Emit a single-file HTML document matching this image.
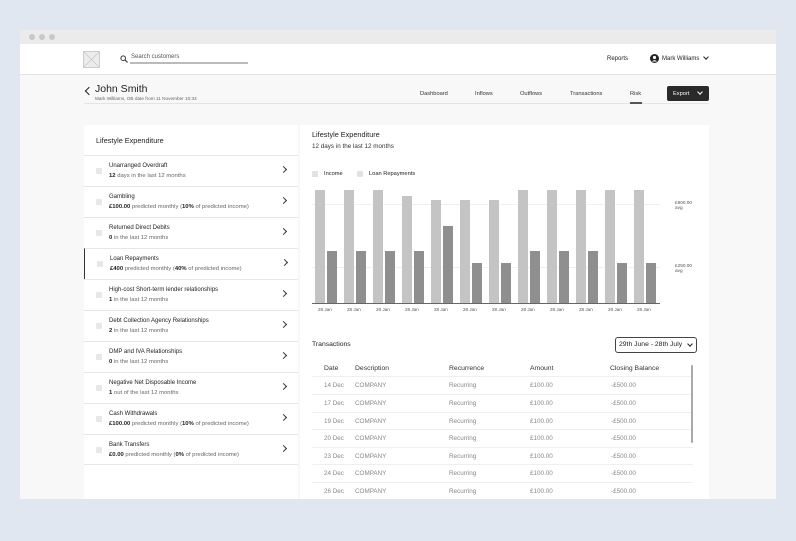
<!DOCTYPE html>
<html><head><meta charset="utf-8"><style>
*{margin:0;padding:0;box-sizing:border-box}
body{width:796px;height:541px;background:#e1e7f0;font-family:"Liberation Sans",sans-serif;position:relative;overflow:hidden;color:#222}
.a{position:absolute}
.win{left:20px;top:30px;width:756px;height:469px;background:#f8f8f8;overflow:hidden}
.t{position:absolute;white-space:nowrap}
.item{position:absolute;left:84px;width:214px;height:31px;border-top:1px solid #e6e6e6}
.item .cb{position:absolute;left:12px;top:12px;width:6px;height:6px;background:#e8e8e8}
.item .h{position:absolute;left:25px;top:7px;font-size:6px;color:#222}
.item .s{position:absolute;left:25px;top:17px;font-size:5.9px;color:#666}
.item .s b{color:#222}
.item .chev{position:absolute;left:197px;top:11px;width:5px;height:5px;border-right:1.2px solid #333;border-top:1.2px solid #333;transform:rotate(45deg)}
.bar{position:absolute;width:10px}
.lb{background:#c4c4c4}
.db{background:#8f8f8f}
.row{position:absolute;left:312px;width:381px;height:17.5px;border-top:1.5px solid #efefef;font-size:6.3px;color:#888}
.row span{position:absolute;top:5px}
.xl{position:absolute;top:307px;font-size:4.6px;color:#555}
</style></head><body>
<div class="a win"></div>
<div class="a" style="left:20px;top:30px;width:756px;height:14px;background:#ebebeb"></div>
<div class="a" style="left:29px;top:34px;width:6px;height:6px;border-radius:50%;background:#c8c8c8"></div>
<div class="a" style="left:39px;top:34px;width:6px;height:6px;border-radius:50%;background:#c8c8c8"></div>
<div class="a" style="left:49px;top:34px;width:6px;height:6px;border-radius:50%;background:#c8c8c8"></div>
<div class="a" style="left:20px;top:44px;width:756px;height:31px;background:#fff;border-bottom:1px solid #e2e2e2"></div>
<svg class="a" style="left:83px;top:51px" width="17" height="17"><rect x="0.5" y="0.5" width="16" height="16" fill="#ececec" stroke="#ccc"/><path d="M0 0L17 17M17 0L0 17" stroke="#ccc" stroke-width="0.8"/></svg>
<svg class="a" style="left:120px;top:55px" width="8" height="8"><circle cx="3.2" cy="3.2" r="2.3" fill="none" stroke="#333" stroke-width="1"/><path d="M5 5L7.5 7.5" stroke="#333" stroke-width="1.1"/></svg>
<div class="t" style="left:131px;top:54px;font-size:6px;color:#555">Search customers</div>
<div class="a" style="left:130px;top:62px;width:118px;height:1.5px;background:#bbb"></div>
<div class="t" style="left:607px;top:56px;font-size:6px;color:#222">Reports</div>
<svg class="a" style="left:650px;top:54px" width="9" height="9"><circle cx="4.5" cy="4.5" r="4.5" fill="#222"/><circle cx="4.5" cy="3.5" r="1.6" fill="#fff"/><path d="M1.8 7.5Q4.5 4.8 7.2 7.5" fill="#fff"/></svg>
<div class="t" style="left:662px;top:56px;font-size:6px;color:#222">Mark Williams</div>
<div class="a" style="left:704px;top:55px;width:4px;height:4px;border-right:1px solid #222;border-bottom:1px solid #222;transform:rotate(45deg)"></div>

<div class="a" style="left:86px;top:88px;width:6px;height:6px;border-left:1.6px solid #222;border-bottom:1.6px solid #222;transform:rotate(45deg)"></div>
<div class="t" style="left:95px;top:83px;font-size:10.5px;color:#222">John Smith</div>
<div class="t" style="left:95px;top:96px;font-size:4.7px;color:#666">Mark Williams, OB date from 11 November 10:34</div>
<div class="a" style="left:84px;top:103px;width:625px;height:1px;background:#e4e4e4"></div>
<div class="t" style="left:420px;top:91px;font-size:5.7px;color:#333">Dashboard</div>
<div class="t" style="left:475px;top:91px;font-size:5.7px;color:#333">Inflows</div>
<div class="t" style="left:520px;top:91px;font-size:5.7px;color:#333">Outflows</div>
<div class="t" style="left:570px;top:91px;font-size:5.7px;color:#333">Transactions</div>
<div class="t" style="left:630px;top:91px;font-size:5.7px;color:#333">Risk</div>
<div class="a" style="left:630px;top:102px;width:12px;height:1.5px;background:#555"></div>
<div class="a" style="left:667px;top:86px;width:42px;height:15px;background:#2a2a2a;border-radius:2px"></div>
<div class="t" style="left:673px;top:90.5px;font-size:5.7px;color:#fff">Export</div>
<div class="a" style="left:698px;top:90px;width:4px;height:4px;border-right:1px solid #fff;border-bottom:1px solid #fff;transform:rotate(45deg)"></div>

<div class="a" style="left:84px;top:125px;width:214px;height:374px;background:#fff"></div>
<div class="t" style="left:96px;top:136px;font-size:7.3px;color:#222">Lifestyle Expenditure</div>
<div class="item" style="top:155px"><div class="cb"></div><div class="h">Unarranged Overdraft</div><div class="s"><b>12</b> days in the last 12 months</div><div class="chev"></div></div>
<div class="item" style="top:186px"><div class="cb"></div><div class="h">Gambling</div><div class="s"><b>£100.00</b> predicted monthly (<b>10%</b> of predicted income)</div><div class="chev"></div></div>
<div class="item" style="top:217px"><div class="cb"></div><div class="h">Returned Direct Debits</div><div class="s"><b>0</b> in the last 12 months</div><div class="chev"></div></div>
<div class="item" style="top:248px;border-left:1.5px solid #333"><div class="cb"></div><div class="h">Loan Repayments</div><div class="s"><b>£400</b> predicted monthly (<b>40%</b> of predicted income)</div><div class="chev"></div></div>
<div class="item" style="top:279px"><div class="cb"></div><div class="h">High-cost Short-term lender relationships</div><div class="s"><b>1</b> in the last 12 months</div><div class="chev"></div></div>
<div class="item" style="top:310px"><div class="cb"></div><div class="h">Debt Collection Agency Relationships</div><div class="s"><b>2</b> in the last 12 months</div><div class="chev"></div></div>
<div class="item" style="top:341px"><div class="cb"></div><div class="h">DMP and IVA Relationships</div><div class="s"><b>0</b> in the last 12 months</div><div class="chev"></div></div>
<div class="item" style="top:372px"><div class="cb"></div><div class="h">Negative Net Disposable Income</div><div class="s"><b>1</b> out of the last 12 months</div><div class="chev"></div></div>
<div class="item" style="top:403px"><div class="cb"></div><div class="h">Cash Withdrawals</div><div class="s"><b>£100.00</b> predicted monthly (<b>10%</b> of predicted income)</div><div class="chev"></div></div>
<div class="item" style="top:434px;border-bottom:1px solid #e6e6e6"><div class="cb"></div><div class="h">Bank Transfers</div><div class="s"><b>£0.00</b> predicted monthly (<b>0%</b> of predicted income)</div><div class="chev"></div></div>

<div class="a" style="left:300px;top:125px;width:409px;height:374px;background:#fff"></div>
<div class="t" style="left:312px;top:130px;font-size:7.3px;color:#222">Lifestyle Expenditure</div>
<div class="t" style="left:312px;top:143px;font-size:6.3px;color:#333">12 days in the last 12 months</div>
<div class="a" style="left:312px;top:171px;width:6px;height:6px;background:#e2e2e2"></div>
<div class="t" style="left:324px;top:171px;font-size:5.7px;color:#222">Income</div>
<div class="a" style="left:357px;top:171px;width:6px;height:6px;background:#e2e2e2"></div>
<div class="t" style="left:369px;top:171px;font-size:5.7px;color:#222">Loan Repayments</div>
<div class="a" style="left:312px;top:204px;width:348px;height:1px;background:#f0f0f0"></div>
<div class="a" style="left:312px;top:267px;width:348px;height:1px;background:#f0f0f0"></div>
<div class="t" style="left:675px;top:200px;font-size:4.7px;color:#555;line-height:5px">£900.00<br>avg</div>
<div class="t" style="left:675px;top:263px;font-size:4.7px;color:#555;line-height:5px">£250.00<br>avg</div>
<div class="a" style="left:312px;top:303px;width:348px;height:1px;background:#666"></div>
<div class="bar lb" style="left:315px;top:190px;height:113px"></div><div class="bar db" style="left:327px;top:251px;height:52px"></div>
<div class="bar lb" style="left:344px;top:190px;height:113px"></div><div class="bar db" style="left:356px;top:251px;height:52px"></div>
<div class="bar lb" style="left:373px;top:190px;height:113px"></div><div class="bar db" style="left:385px;top:251px;height:52px"></div>
<div class="bar lb" style="left:402px;top:196px;height:107px"></div><div class="bar db" style="left:414px;top:251px;height:52px"></div>
<div class="bar lb" style="left:431px;top:200px;height:103px"></div><div class="bar db" style="left:443px;top:226px;height:77px"></div>
<div class="bar lb" style="left:460px;top:200px;height:103px"></div><div class="bar db" style="left:472px;top:263px;height:40px"></div>
<div class="bar lb" style="left:489px;top:200px;height:103px"></div><div class="bar db" style="left:501px;top:263px;height:40px"></div>
<div class="bar lb" style="left:518px;top:190px;height:113px"></div><div class="bar db" style="left:530px;top:251px;height:52px"></div>
<div class="bar lb" style="left:547px;top:190px;height:113px"></div><div class="bar db" style="left:559px;top:251px;height:52px"></div>
<div class="bar lb" style="left:576px;top:190px;height:113px"></div><div class="bar db" style="left:588px;top:251px;height:52px"></div>
<div class="bar lb" style="left:605px;top:190px;height:113px"></div><div class="bar db" style="left:617px;top:263px;height:40px"></div>
<div class="bar lb" style="left:634px;top:190px;height:113px"></div><div class="bar db" style="left:646px;top:263px;height:40px"></div>
<div class="xl" style="left:318px">28 Jan</div>
<div class="xl" style="left:347px">28 Jan</div>
<div class="xl" style="left:376px">28 Jan</div>
<div class="xl" style="left:405px">28 Jan</div>
<div class="xl" style="left:434px">28 Jan</div>
<div class="xl" style="left:463px">28 Jan</div>
<div class="xl" style="left:492px">28 Jan</div>
<div class="xl" style="left:521px">28 Jan</div>
<div class="xl" style="left:550px">28 Jan</div>
<div class="xl" style="left:579px">28 Jan</div>
<div class="xl" style="left:608px">28 Jan</div>
<div class="xl" style="left:637px">28 Jan</div>

<div class="t" style="left:312px;top:341px;font-size:6.8px;color:#222">Transactions</div>
<div class="a" style="left:615px;top:337px;width:82px;height:16px;border:1px solid #444;border-radius:3px"></div>
<div class="t" style="left:619px;top:341px;font-size:6.8px;color:#222">29th June - 28th July</div>
<div class="a" style="left:688px;top:342px;width:4px;height:4px;border-right:1px solid #222;border-bottom:1px solid #222;transform:rotate(45deg)"></div>
<div class="t" style="left:324px;top:365px;font-size:6.8px;color:#333">Date</div>
<div class="t" style="left:355px;top:365px;font-size:6.8px;color:#333">Description</div>
<div class="t" style="left:449px;top:365px;font-size:6.8px;color:#333">Recurrence</div>
<div class="t" style="left:530px;top:365px;font-size:6.8px;color:#333">Amount</div>
<div class="t" style="left:610px;top:365px;font-size:6.8px;color:#333">Closing Balance</div>
<div class="row" style="top:376px"><span style="left:12px">14 Dec</span><span style="left:43px">COMPANY</span><span style="left:137px">Recurring</span><span style="left:218px">£100.00</span><span style="left:299px">-£500.00</span></div>
<div class="row" style="top:394px"><span style="left:12px">17 Dec</span><span style="left:43px">COMPANY</span><span style="left:137px">Recurring</span><span style="left:218px">£100.00</span><span style="left:299px">-£500.00</span></div>
<div class="row" style="top:411.5px"><span style="left:12px">19 Dec</span><span style="left:43px">COMPANY</span><span style="left:137px">Recurring</span><span style="left:218px">£100.00</span><span style="left:299px">-£500.00</span></div>
<div class="row" style="top:429px"><span style="left:12px">20 Dec</span><span style="left:43px">COMPANY</span><span style="left:137px">Recurring</span><span style="left:218px">£100.00</span><span style="left:299px">-£500.00</span></div>
<div class="row" style="top:446.5px"><span style="left:12px">23 Dec</span><span style="left:43px">COMPANY</span><span style="left:137px">Recurring</span><span style="left:218px">£100.00</span><span style="left:299px">-£500.00</span></div>
<div class="row" style="top:464px"><span style="left:12px">24 Dec</span><span style="left:43px">COMPANY</span><span style="left:137px">Recurring</span><span style="left:218px">£100.00</span><span style="left:299px">-£500.00</span></div>
<div class="row" style="top:482px"><span style="left:12px">26 Dec</span><span style="left:43px">COMPANY</span><span style="left:137px">Recurring</span><span style="left:218px">£100.00</span><span style="left:299px">-£500.00</span></div>
<div class="a" style="left:691px;top:365px;width:2px;height:78px;background:#aaa;border-radius:1px"></div>
<div class="a" style="left:0;top:499px;width:796px;height:42px;background:#e1e7f0"></div>
</body></html>
